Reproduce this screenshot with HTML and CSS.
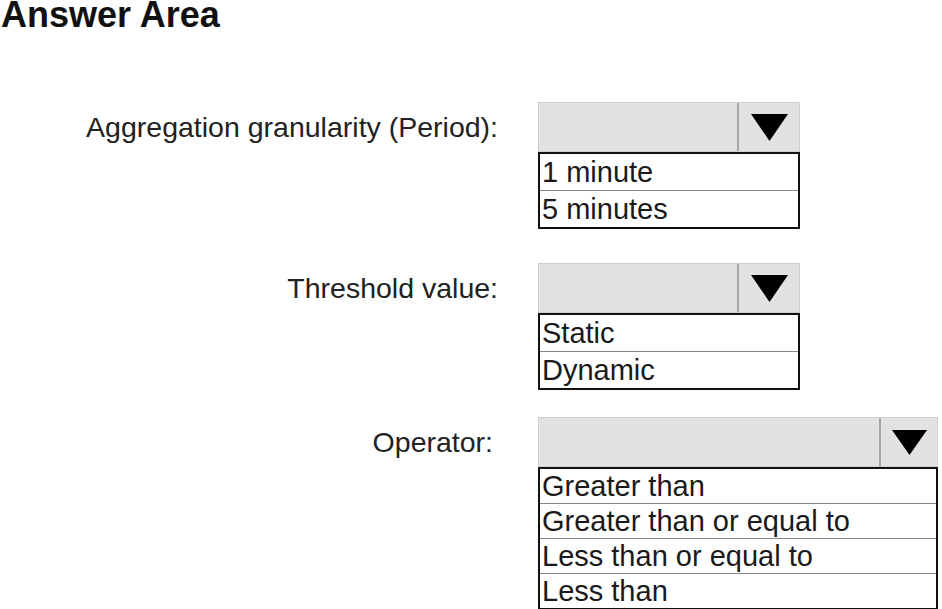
FILE: index.html
```html
<!DOCTYPE html>
<html lang="en">
<head>
  <meta charset="UTF-8">
  <meta name="viewport" content="width=device-width, initial-scale=1.0">
  <title>Answer Area</title>
  <link rel="stylesheet" href="styles.css">
</head>
<body>
  <h1 class="title">Answer Area</h1>

  <div class="form">
    <div class="field">
      <div class="field-label">Aggregation granularity (Period):</div>
      <div class="select">
        <div class="dropdown">
          <div class="dropdown-value"></div>
          <div class="dropdown-arrow">
            <svg width="37" height="27" viewBox="0 0 37 27"><polygon points="0,0 37,0 18.5,27" fill="#000"/></svg>
          </div>
        </div>
        <ul class="options">
          <li>1 minute</li>
          <li>5 minutes</li>
        </ul>
      </div>
    </div>

    <div class="field field-threshold">
      <div class="field-label">Threshold value:</div>
      <div class="select">
        <div class="dropdown">
          <div class="dropdown-value"></div>
          <div class="dropdown-arrow">
            <svg width="37" height="27" viewBox="0 0 37 27"><polygon points="0,0 37,0 18.5,27" fill="#000"/></svg>
          </div>
        </div>
        <ul class="options">
          <li>Static</li>
          <li>Dynamic</li>
        </ul>
      </div>
    </div>

    <div class="field field-operator">
      <div class="field-label">Operator:</div>
      <div class="select select-wide">
        <div class="dropdown">
          <div class="dropdown-value"></div>
          <div class="dropdown-arrow">
            <svg width="35" height="25" viewBox="0 0 35 25"><polygon points="0,0 35,0 17.5,25" fill="#000"/></svg>
          </div>
        </div>
        <ul class="options">
          <li>Greater than</li>
          <li>Greater than or equal to</li>
          <li>Less than or equal to</li>
          <li>Less than</li>
        </ul>
      </div>
    </div>
  </div>
</body>
</html>
```

FILE: styles.css
```css
body {
  font-family: 'Liberation Sans', Arial, sans-serif;
  background-color: #fff;
  color: #1a1a1a;
  margin: 0;
  padding: 0;
}

.title {
  font-size: 36px;
  font-weight: bold;
  line-height: 30px;
  margin: 0 0 0 1px;
  color: #111;
}

.form {
  padding-top: 72px;
}

.field {
  display: flex;
  align-items: flex-start;
}

.field-threshold {
  margin-top: 34px;
}

.field-operator {
  margin-top: 27px;
}

.field-label {
  width: 498px;
  height: 50px;
  line-height: 50px;
  text-align: right;
  font-size: 28.5px;
  color: #222;
}

.field-operator .field-label {
  width: 493px;
  margin-right: 5px;
}

.select {
  margin-left: 40px;
  width: 262px;
}

.select-wide {
  width: 400px;
}

.dropdown {
  display: flex;
  height: 50px;
  box-sizing: border-box;
  background-color: #e2e2e2;
  border: 1px solid #cfcfcf;
}

.dropdown-value {
  flex: 1;
}

.dropdown-arrow {
  width: 60px;
  border-left: 2px solid #a8a8a8;
  display: flex;
  align-items: center;
  justify-content: center;
}

.select-wide .dropdown-arrow {
  width: 56px;
}

.options {
  list-style: none;
  margin: 0;
  padding: 0;
  border: 2px solid #111;
  background-color: #fff;
}

.options li {
  height: 36px;
  line-height: 36px;
  padding-left: 2px;
  font-size: 29px;
  color: #1a1a1a;
}

.options li + li {
  border-top: 1px solid #888;
}

.select-wide .options li {
  height: 34px;
  line-height: 34px;
}
```
